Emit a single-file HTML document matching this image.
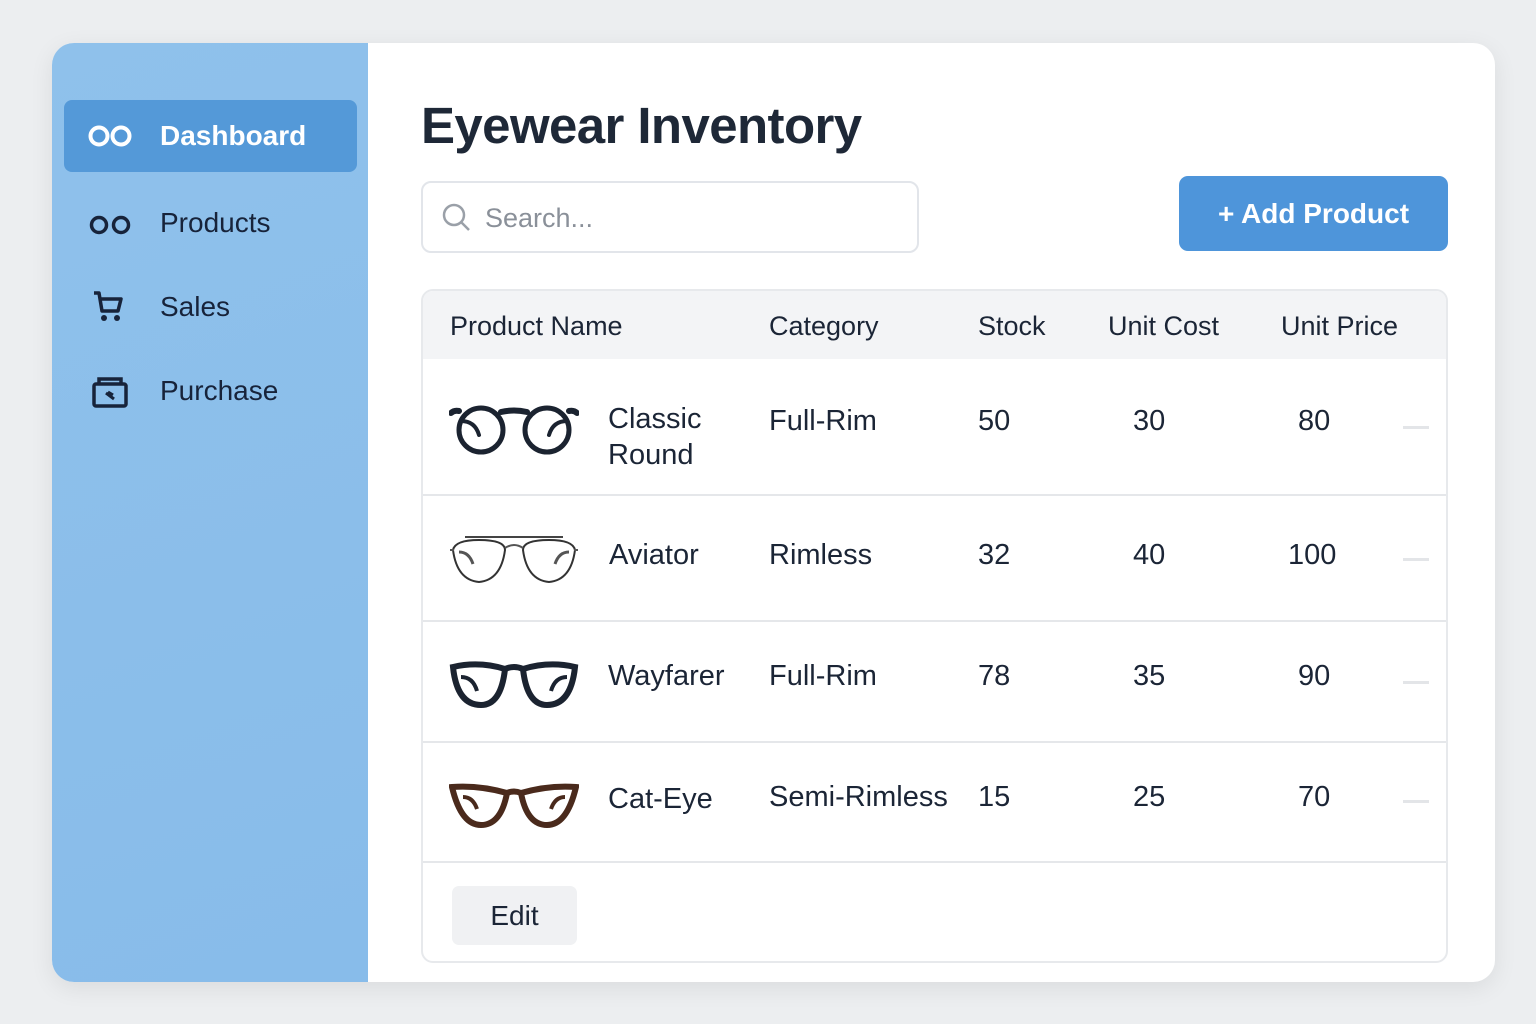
<!DOCTYPE html>
<html><head><meta charset="utf-8"><style>
*{margin:0;padding:0;box-sizing:border-box}
body{width:1536px;height:1024px;background:#eceef0;font-family:"Liberation Sans",sans-serif;position:relative;overflow:hidden;color:#1b2536}
.card{position:absolute;left:52px;top:43px;width:1443px;height:939px;background:#fff;border-radius:22px;overflow:hidden;box-shadow:0 6px 24px rgba(0,0,0,.08)}
.side{position:absolute;left:0;top:0;width:316px;height:100%;background:linear-gradient(160deg,#8fc1eb,#88bcea)}
.nav{position:absolute;left:12px;width:293px;height:72px;display:flex;align-items:center;font-size:28px;color:#17233a}
.nav svg{position:absolute;left:24px}
.nav span{position:absolute;left:96px}
.active{background:#5499d8;border-radius:8px;color:#fff;font-weight:bold}
.abs{position:absolute}
h1{position:absolute;left:369px;top:53px;font-size:51px;font-weight:bold;color:#1e2837;letter-spacing:-.6px}
.search{position:absolute;left:369px;top:138px;width:498px;height:72px;border:2px solid #e2e5ea;border-radius:10px}
.search span{position:absolute;left:62px;top:20px;font-size:27px;color:#8a9099}
.btn{position:absolute;left:1127px;top:133px;width:269px;height:75px;background:#4e95da;border-radius:9px;color:#fff;font-size:28px;font-weight:bold;display:flex;align-items:center;justify-content:center}
.table{position:absolute;left:369px;top:246px;width:1027px;height:674px;border:2px solid #e7e9ec;border-radius:12px;overflow:hidden}
.th{position:absolute;left:0;top:0;width:100%;height:68px;background:#f3f4f6;font-size:27px;color:#1e2837}
.t{position:absolute;font-size:29px;color:#1b2536}
.line{position:absolute;left:0;width:100%;height:2px;background:#e5e7ea}
.dash{position:absolute;left:980px;width:26px;height:3px;background:#e3e5e8}
.edit{position:absolute;left:29px;top:595px;width:125px;height:59px;background:#f0f1f3;border-radius:7px;font-size:28px;display:flex;align-items:center;justify-content:center}
</style></head><body>
<div class="card">
<div class="side">
 <div class="nav active" style="top:57px"><svg width="44" height="26" viewBox="0 0 44 26"><circle cx="11" cy="13" r="8.5" fill="none" stroke="#fff" stroke-width="4"/><circle cx="33" cy="13" r="8.5" fill="none" stroke="#fff" stroke-width="4"/></svg><span>Dashboard</span></div>
 <div class="nav" style="top:144px"><svg width="44" height="26" viewBox="0 0 44 26"><circle cx="11" cy="15" r="7.5" fill="none" stroke="#17233a" stroke-width="3.5"/><circle cx="33" cy="15" r="7.5" fill="none" stroke="#17233a" stroke-width="3.5"/></svg><span>Products</span></div>
 <div class="nav" style="top:228px"><svg width="44" height="34" viewBox="0 0 44 34"><path d="M6 3h5l3 18h16l3-12H13" fill="none" stroke="#17233a" stroke-width="3.5" stroke-linejoin="round"/><circle cx="16" cy="28" r="3" fill="#17233a"/><circle cx="29" cy="28" r="3" fill="#17233a"/></svg><span>Sales</span></div>
 <div class="nav" style="top:312px"><svg width="44" height="36" viewBox="0 0 44 36"><rect x="6" y="11" width="32" height="22" rx="2" fill="none" stroke="#17233a" stroke-width="3.5"/><path d="M11 11V6h22v5" fill="none" stroke="#17233a" stroke-width="3.5"/><path d="M18 20l8 6M20 19l5 3" stroke="#17233a" stroke-width="3"/></svg><span>Purchase</span></div>
</div>
<h1>Eyewear Inventory</h1>
<div class="search"><svg class="abs" style="left:18px;top:19px" width="32" height="32" viewBox="0 0 32 32"><circle cx="13" cy="13" r="10" fill="none" stroke="#9aa0a8" stroke-width="2.5"/><path d="M20 20l8 8" stroke="#9aa0a8" stroke-width="2.5"/></svg><span>Search...</span></div>
<div class="btn">+ Add Product</div>
<div class="table">
 <div class="th"><span class="t" style="left:27px;top:20px;font-size:27px">Product Name</span><span class="t" style="left:346px;top:20px;font-size:27px">Category</span><span class="t" style="left:555px;top:20px;font-size:27px">Stock</span><span class="t" style="left:685px;top:20px;font-size:27px">Unit Cost</span><span class="t" style="left:858px;top:20px;font-size:27px">Unit Price</span></div>
 <!-- row1 -->
 <svg class="abs" style="left:26px;top:112px" width="130" height="54" viewBox="0 0 130 54"><path d="M2 10 Q5 7 10 8M52 9 Q65 6 78 9M120 8 Q125 7 128 10" stroke="#1b2330" stroke-width="6" fill="none" stroke-linecap="round"/><circle cx="32" cy="27" r="22" fill="none" stroke="#1b2330" stroke-width="5"/><circle cx="98" cy="27" r="22" fill="none" stroke="#1b2330" stroke-width="5"/><path d="M12 18q14 0 18 14M118 18q-14 0-18 14" stroke="#1b2330" stroke-width="4" fill="none" stroke-linecap="round"/></svg>
 <span class="t" style="left:185px;top:110px;line-height:36px">Classic<br>Round</span>
 <span class="t" style="left:346px;top:114px">Full-Rim</span><span class="t" style="left:555px;top:114px">50</span><span class="t" style="left:710px;top:114px">30</span><span class="t" style="left:875px;top:114px">80</span>
 <div class="dash" style="top:135px"></div>
 <div class="line" style="top:203px"></div>
 <!-- row2 -->
 <svg class="abs" style="left:26px;top:243px" width="130" height="54" viewBox="0 0 130 54"><path d="M16 3h98" stroke="#444" stroke-width="2"/><path d="M4 16 Q6 6 30 6 Q56 6 56 16 Q52 46 30 48 Q8 46 4 16Z" fill="none" stroke="#333" stroke-width="2"/><path d="M126 16 Q124 6 100 6 Q74 6 74 16 Q78 46 100 48 Q122 46 126 16Z" fill="none" stroke="#333" stroke-width="2"/><path d="M56 14q9-6 18 0M1 16h4M125 16h4" stroke="#555" stroke-width="2" fill="none"/><path d="M10 18q10 0 14 12M120 18q-10 0-14 12" stroke="#555" stroke-width="3" fill="none"/></svg>
 <span class="t" style="left:186px;top:248px">Aviator</span>
 <span class="t" style="left:346px;top:248px">Rimless</span><span class="t" style="left:555px;top:248px">32</span><span class="t" style="left:710px;top:248px">40</span><span class="t" style="left:865px;top:248px">100</span>
 <div class="dash" style="top:267px"></div>
 <div class="line" style="top:329px"></div>
 <!-- row3 -->
 <svg class="abs" style="left:26px;top:370px" width="130" height="48" viewBox="0 0 130 48"><path d="M4 6 Q30 0 56 8 Q52 44 32 44 Q8 44 4 6Z" fill="none" stroke="#1b2330" stroke-width="6"/><path d="M126 6 Q100 0 74 8 Q78 44 98 44 Q122 44 126 6Z" fill="none" stroke="#1b2330" stroke-width="6"/><path d="M56 8q9-4 18 0" stroke="#1b2330" stroke-width="6" fill="none"/><path d="M12 16q12 0 16 14M118 16q-12 0-16 14" stroke="#1b2330" stroke-width="4" fill="none"/></svg>
 <span class="t" style="left:185px;top:369px">Wayfarer</span>
 <span class="t" style="left:346px;top:369px">Full-Rim</span><span class="t" style="left:555px;top:369px">78</span><span class="t" style="left:710px;top:369px">35</span><span class="t" style="left:875px;top:369px">90</span>
 <div class="dash" style="top:390px"></div>
 <div class="line" style="top:450px"></div>
 <!-- row4 -->
 <svg class="abs" style="left:26px;top:492px" width="130" height="48" viewBox="0 0 130 48"><path d="M3 4 Q30 2 58 10 Q52 42 32 42 Q12 42 3 4Z" fill="none" stroke="#4a2a1c" stroke-width="6"/><path d="M127 4 Q100 2 72 10 Q78 42 98 42 Q118 42 127 4Z" fill="none" stroke="#4a2a1c" stroke-width="6"/><path d="M58 10q7-3 14 0" stroke="#4a2a1c" stroke-width="6" fill="none"/><path d="M14 14q10 0 14 12M116 14q-10 0-14 12" stroke="#4a2a1c" stroke-width="4" fill="none"/></svg>
 <span class="t" style="left:185px;top:492px">Cat-Eye</span>
 <span class="t" style="left:346px;top:490px">Semi-Rimless</span><span class="t" style="left:555px;top:490px">15</span><span class="t" style="left:710px;top:490px">25</span><span class="t" style="left:875px;top:490px">70</span>
 <div class="dash" style="top:509px"></div>
 <div class="line" style="top:570px"></div>
 <div class="edit">Edit</div>
</div>
</div>
</body></html>
